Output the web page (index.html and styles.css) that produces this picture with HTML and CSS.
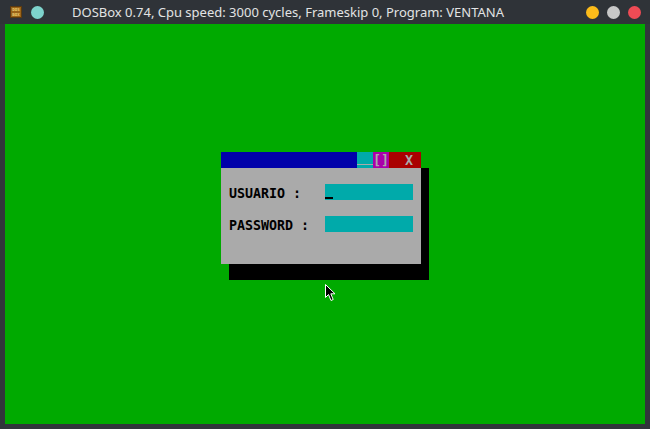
FILE: index.html
```
<!DOCTYPE html>
<html>
<head>
<meta charset="utf-8">
<link rel="stylesheet" href="styles.css">
</head>
<body>
<div class="win">
  <div class="titlebar">
    <svg class="appicon" width="12" height="12" viewBox="0 0 12 12">
      <rect x="0.5" y="0.5" width="11" height="11" fill="#9a6418" stroke="#5a3a10"/>
      <text x="6" y="5" font-size="4.2" font-family="DejaVu Sans Mono" font-weight="bold" fill="#f0d070" text-anchor="middle">DOS</text>
      <text x="6" y="10" font-size="4.2" font-family="DejaVu Sans Mono" font-weight="bold" fill="#f0d070" text-anchor="middle">BOX</text>
    </svg>
    <span class="dot dot-teal"></span>
    <span class="title">DOSBox 0.74, Cpu speed: 3000 cycles, Frameskip 0, Program: VENTANA</span>
    <span class="spacer"></span>
    <span class="dot dot-yellow"></span>
    <span class="dot dot-gray"></span>
    <span class="dot dot-red"></span>
  </div>
  <div class="screen">
    <div class="dlg">
      <div class="dlg-title">
        <span class="t-blue"></span>
        <span class="t-cyan"><span class="minline"></span></span>
        <span class="t-mag"><span class="cell">[</span><span class="cell">]</span></span>
        <span class="t-red">X</span>
      </div>
      <div class="dlg-body">
        <div class="row">
          <span class="label">USUARIO :</span>
          <span class="field"><span class="cursor"></span></span>
        </div>
        <div class="row">
          <span class="label">PASSWORD :</span>
          <span class="field"></span>
        </div>
      </div>
    </div>
    <svg class="pointer" width="12" height="18" viewBox="0 0 12 18">
      <path d="M0.5 0.5 L0.5 13.5 L3.5 10.5 L6 16.5 L8.2 15.5 L5.8 9.8 L10 9.8 Z" fill="#000" stroke="#fff" stroke-width="1"/>
    </svg>
  </div>
</div>
</body>
</html>
```
FILE: styles.css
```
html, body {
  margin: 0;
  padding: 0;
  background: #31363b;
  width: 650px;
  height: 429px;
  overflow: hidden;
}
.win {
  width: 650px;
  height: 429px;
  display: flex;
  flex-direction: column;
  background: #31363b;
}
.titlebar {
  height: 24px;
  display: flex;
  align-items: center;
  padding: 0 5px 0 10px;
  box-sizing: border-box;
  background: #2f3338;
}
.appicon {
  display: block;
  margin-top: -1px;
}
.dot {
  width: 13px;
  height: 13px;
  border-radius: 50%;
  display: block;
  margin-top: 1px;
}
.dot-teal { background: #7ed3cc; margin-left: 9px; }
.title {
  font-family: "Noto Sans", sans-serif;
  font-size: 13px;
  color: #e2e3e4;
  margin-left: 28px;
  white-space: nowrap;
  line-height: 24px;
}
.spacer { flex: 1; }
.dot-yellow { background: #fdbc1a; margin-right: 8px; }
.dot-gray { background: #c8c8c8; margin-right: 8px; }
.dot-red { background: #ef4b55; margin-right: 4px; }
.screen {
  position: relative;
  margin: 0 5px;
  width: 640px;
  height: 400px;
  background: #00aa00;
  padding: 128px 0 0 216px;
  box-sizing: border-box;
}
.dlg {
  width: 200px;
  box-shadow: 8px 16px 0 #000;
  font-family: "DejaVu Sans Mono", "Liberation Mono", monospace;
  font-weight: bold;
  font-size: 13.3px;
}
.dlg-title {
  display: flex;
  height: 16px;
  line-height: 16px;
}
.t-blue { width: 136px; background: #0000aa; }
.t-cyan {
  width: 16px;
  background: #00aaaa;
  position: relative;
}
.minline {
  display: block;
  position: absolute;
  left: 0;
  right: 0;
  top: 12px;
  height: 1px;
  background: #aaaaaa;
}
.t-mag {
  width: 16px;
  background: #aa00aa;
  color: #aaaaaa;
  display: flex;
  padding-top: 1px;
  box-sizing: border-box;
}
.cell {
  width: 8px;
  text-align: center;
}
.t-red {
  width: 32px;
  background: #aa0000;
  color: #aaaaaa;
  box-sizing: border-box;
  padding-left: 16px;
  padding-top: 1px;
}
.dlg-body {
  background: #aaaaaa;
  height: 96px;
  box-sizing: border-box;
  padding: 16px 0 0 8px;
  display: flex;
  flex-direction: column;
  gap: 16px;
}
.row {
  display: flex;
  height: 16px;
  line-height: 16px;
}
.label {
  width: 96px;
  color: #000;
  white-space: pre;
  padding-top: 2px;
}
.field {
  width: 88px;
  height: 16px;
  background: #00aaaa;
  position: relative;
}
.cursor {
  position: absolute;
  left: 0;
  top: 13px;
  width: 8px;
  height: 2px;
  background: #000;
}
.pointer {
  position: absolute;
  left: 320px;
  top: 260px;
}
```
